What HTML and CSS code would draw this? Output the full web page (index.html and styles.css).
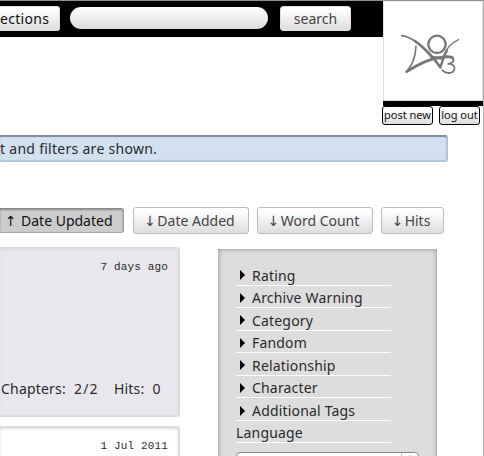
FILE: index.html
```html
<!DOCTYPE html>
<html lang="en">
<head>
<meta charset="utf-8">
<title>Works</title>
<link rel="stylesheet" href="styles.css">
</head>
<body>
<div class="page">
  <header class="top">
    <nav class="bar">
      <a class="btn collections">ections</a>
      <input class="query" type="text" aria-label="Search">
      <button class="btn search">search</button>
    </nav>
    <div class="account">
      <div class="avatar">
        <svg viewBox="9 3 300 300" fill="none" stroke="#777" stroke-linecap="round">
          <path d="M65 107C98 112 131 142 153 170" stroke-width="5"/>
          <path d="M105 123C132 142 160 172 181 202" stroke-width="8"/>
          <circle cx="171" cy="133" r="26" stroke-width="7"/>
          <path d="M236 119C216 128 201 145 193 162" stroke-width="4.5"/>
          <path d="M201 151C191 167 189 181 181 201" stroke-width="7"/>
          <path d="M108 139C107 165 100 192 81 213" stroke-width="5"/>
          <path d="M80 215C112 194 145 177 180 172C198 169 215 170 218 174" stroke-width="8.5"/>
          <path d="M218 174C226 184 214 191 203 192C218 190 226 200 223 209C219 221 199 223 187 211" stroke-width="5.5"/>
          <path d="M155 171L190 176" stroke-width="8"/>
        </svg>
      </div>
      <div class="actions"><a class="mini post">post new</a><a class="mini logout">log out</a></div>
    </div>
  </header>
  <p class="notice">t and filters are shown.</p>
  <nav class="sort">
    <a class="btn current"><i>↑</i><span>Date Updated</span></a>
    <a class="btn added"><i>↓</i><span>Date Added</span></a>
    <a class="btn words"><i>↓</i><span>Word Count</span></a>
    <a class="btn hits"><i>↓</i><span>Hits</span></a>
  </nav>
  <main class="content">
    <div class="works">
      <article class="work own">
        <time>7 days ago</time>
        <p class="stats"><span>Chapters:</span><span class="count">2/2</span><span class="hit">Hits:</span><span>0</span></p>
      </article>
      <article class="work"><time>1 Jul 2011</time></article>
    </div>
    <aside class="filters">
      <ul>
        <li class="fold">Rating</li>
        <li class="fold">Archive Warning</li>
        <li class="fold">Category</li>
        <li class="fold">Fandom</li>
        <li class="fold">Relationship</li>
        <li class="fold">Character</li>
        <li class="fold">Additional Tags</li>
        <li>Language</li>
      </ul>
      <div class="select"><span></span></div>
    </aside>
  </main>
</div>
</body>
</html>
```
FILE: styles.css
```css
* { box-sizing: border-box; }
body { margin: 0; background: #fff; color: #2a2a2a; font: 14px/20px "Noto Sans", sans-serif; }
p, ul { margin: 0; padding: 0; }
.page { width: 484px; height: 456px; overflow: hidden; border-top: 1px solid #8b8f8e; border-right: 1px solid #b4b4b4; }
.top { display: flex; height: 134px; }
.bar { display: flex; width: 383px; height: 36px; padding-top: 5px; background: #000; }
.btn { display: flex; align-items: center; justify-content: center; padding: 0; white-space: nowrap; border: 1px solid #bbb; border-radius: 3px; background: linear-gradient(#fff 10%, #ddd); color: #444; font: 14px/20px "Noto Sans", sans-serif; }
.bar .btn { height: 25px; border-color: #ddd; }
.bar .collections { width: 60px; justify-content: flex-start; border-left: 0; border-radius: 0 3px 3px 0; color: #111; letter-spacing: .3px; }
.query { width: 198px; height: 22px; margin: 1px 12px 0 10px; padding: 0 10px; border: 0; border-radius: 11px; background: linear-gradient(#fff, #ddd); }
.bar .search { width: 71px; }
.account { width: 100px; }
.avatar { width: 100px; height: 100px; border: 1px solid #ddd; border-top-color: #eee; }
.avatar svg { display: block; width: 100px; height: 100px; margin: -1px; }
.actions { display: flex; gap: 6px; margin-left: -1px; height: 24px; padding-top: 5px; background: linear-gradient(#000, #000) 1px 0 / 100px 5px no-repeat; }
.mini { display: flex; align-items: center; justify-content: center; height: 19px; padding-bottom: 2px; white-space: nowrap; border: 1px solid #000; border-radius: 3px; background: linear-gradient(#fff 20%, #ddd); color: #111; font-size: 11px; line-height: 16px; }
.post { width: 51px; }
.logout { width: 41px; }
.notice { width: 448px; height: 27px; padding-top: 3px; border: 1px solid #b3c4d0; border-top-color: #7d8f9b; border-left: 0; border-radius: 0 3px 3px 0; background: #d1e1ef; box-shadow: inset 0 1px 1px #788995, inset -1px -1px 1px #b9cad7; letter-spacing: .28px; }
.sort { display: flex; gap: 8px; height: 27px; margin-top: 45px; }
.sort i { width: 9px; margin-right: 3px; margin-left: -2px; font-style: normal; font-family: "DejaVu Sans", sans-serif; text-indent: -1px; }
.current { width: 124px; margin-right: 1px; height: 25px; margin-top: 1px; justify-content: flex-start; padding-left: 8px; border-color: #888 #999 #aaa; border-left: 0; border-radius: 0 3px 3px 0; background: #ccc; color: #111; box-shadow: inset 0 1px 2px #888; }
.current i { margin-right: 6px; }
.added, .words { width: 116px; }
.hits { width: 63px; }
.content { display: flex; margin-top: 13px; }
.works { width: 180px; }
.work { height: 170px; margin-bottom: 9px; padding: 10px 10px 0 0; border: 2px solid #dcdcdc; border-left: 0; border-radius: 0 3px 3px 0; background: #fff; box-shadow: inset 0 1px 3px #ddd; }
.own { background: #e9e6ed; }
.work time { display: block; text-align: right; font: 11px/16px "Liberation Mono", monospace; letter-spacing: .15px; }
.stats { display: flex; gap: 8px; margin-top: 104px; padding-left: 1px; white-space: nowrap; letter-spacing: .2px; }
.stats .count { width: 24px; letter-spacing: 1.2px; }
.stats .hit { margin-left: 8px; }
.filters { width: 219px; height: 260px; margin: 2px 0 0 38px; padding: 14px 18px; background: #ddd; box-shadow: inset 0 0 5px #888; }
.filters ul { width: 155px; list-style: none; letter-spacing: .18px; }
.filters li { display: flex; align-items: flex-end; height: 22.55px; line-height: 18px; border-bottom: 1px solid #fff; white-space: nowrap; }
.fold::before { content: ""; align-self: center; width: 0; margin: 3px 7px 0 4px; border: solid transparent; border-width: 5px 0 5px 5px; border-left-color: #000; }
.select { display: flex; justify-content: flex-end; width: 183px; height: 22px; margin-top: 9px; border: 1px solid #888; border-radius: 4px; background: #fff; }
.select span { width: 17px; border-left: 1px solid #ccc; }
.select span::before { content: ""; display: block; width: 0; margin: 2px 0 0 5px; border: solid transparent; border-width: 0 3px 5px; border-bottom-color: #777; }
```
